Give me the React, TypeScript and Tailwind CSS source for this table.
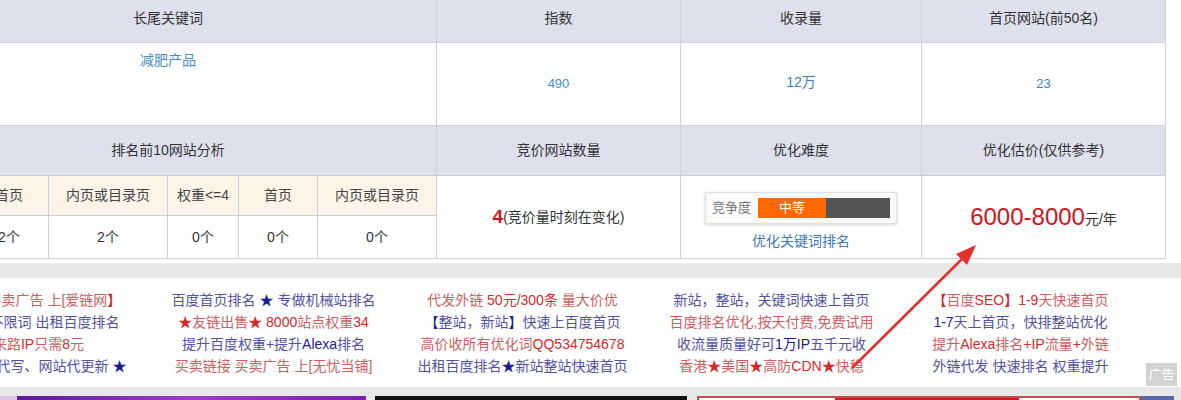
const r = "text-[#cc6060]";
const rd = "text-[#d42a2a]";
const b = "text-[#5252a2]";
const bd = "text-[#1c1c92]";

type Seg = [string, string];

const adCols: Seg[][][] = [
    [
        [[r, "买卖链接 买卖广告 上[爱链网"], [rd + " font-bold", "】"]],
        [[b, "百度快排 不限词 出租百度排名"]],
        [[r, "真实来路"], [rd, "IP"], [r, "只需"], [rd, "8"], [r, "元"]],
        [[b, "★ 原创软文代写、网站代更新 "], [bd, "★"]],
    ],
    [
        [[b, "百度首页排名 "], [bd, "★"], [b, " 专做机械站排名"]],
        [[rd, "★"], [r, "友链出售"], [rd, "★ 8000"], [r, "站点权重"], [rd, "34"]],
        [[b, "提升百度权重+提升"], [bd, "Alexa"], [b, "排名"]],
        [[r, "买卖链接 买卖广告 上[无忧当铺]"]],
    ],
    [
        [[r, "代发外链 "], [rd, "50元/300条"], [r, " 量大价优"]],
        [[bd, "【"], [b, "整站，新站"], [bd, "】"], [b, "快速上百度首页"]],
        [[r, "高价收所有优化词"], [rd, "QQ534754678"]],
        [[b, "出租百度排名"], [bd, "★"], [b, "新站整站快速首页"]],
    ],
    [
        [[b, "新站，整站，关键词快速上首页"]],
        [[r, "百度排名优化,按天付费,免费试用"]],
        [[b, "收流量质量好可"], [bd, "1万IP"], [b, "五千元收"]],
        [[r, "香港"], [rd, "★"], [r, "美国"], [rd, "★"], [r, "高防"], [rd, "CDN★"], [r, "快稳"]],
    ],
    [
        [[rd + " font-bold", "【"], [r, "百度"], [rd, "SEO"], [rd + " font-bold", "】"], [rd, "1-9"], [r, "天快速首页"]],
        [[bd, "1-7"], [b, "天上首页，快排整站优化"]],
        [[r, "提升"], [rd, "Alexa"], [r, "排名"], [rd, "+IP"], [r, "流量"], [rd, "+"], [r, "外链"]],
        [[b, "外链代发 快速排名 权重提升"]],
    ],
];

const subCols = [
    { w: "w-[70px]", head: "权重>4", val: "3个" },
    { w: "w-[79px]", head: "首页", val: "2个" },
    { w: "w-[119px]", head: "内页或目录页", val: "2个" },
    { w: "w-[71px]", head: "权重<=4", val: "0个" },
    { w: "w-[79px]", head: "首页", val: "0个" },
    { w: "w-[119px]", head: "内页或目录页", val: "0个" },
];

const line = "border-[#cdd0dc]";

export default function App() {
    return (
        <div className="relative w-[1181px] h-[400px] overflow-hidden bg-white font-['Liberation_Sans','Noto_Sans_CJK_SC',sans-serif] text-[14px] text-[#333]">
            <div className="-ml-[100px] w-[1266px]">
                {/* header 1 */}
                <div className={`flex h-[43px] bg-[#dee1ed] border-b ${line}`}>
                    <div className={`w-[537px] border-r ${line} flex items-center justify-center pb-[6px]`}>长尾关键词</div>
                    <div className={`w-[244px] border-r ${line} flex items-center justify-center pb-[6px]`}>指数</div>
                    <div className={`w-[241px] border-r ${line} flex items-center justify-center pb-[6px]`}>收录量</div>
                    <div className={`w-[244px] border-r ${line} flex items-center justify-center pb-[6px]`}>首页网站(前50名)</div>
                </div>
                {/* row 1 */}
                <div className={`flex h-[83px] bg-white border-b ${line}`}>
                    <div className={`w-[537px] border-r ${line} flex justify-center pt-[7px] text-[#4a8cc6]`}>减肥产品</div>
                    <div className={`w-[244px] border-r ${line} flex items-center justify-center text-[#4a8ec4] text-[13px]`}>490</div>
                    <div className={`w-[241px] border-r ${line} flex items-center justify-center text-[#3e7fb9] pb-[4px]`}>12万</div>
                    <div className={`w-[244px] border-r ${line} flex items-center justify-center text-[#3e7fb9] text-[13px]`}>23</div>
                </div>
                {/* header 2 */}
                <div className={`flex h-[50px] bg-[#dee1ed] border-b ${line}`}>
                    <div className={`w-[537px] border-r ${line} flex items-center justify-center`}>排名前10网站分析</div>
                    <div className={`w-[244px] border-r ${line} flex items-center justify-center`}>竞价网站数量</div>
                    <div className={`w-[241px] border-r ${line} flex items-center justify-center`}>优化难度</div>
                    <div className={`w-[244px] border-r ${line} flex items-center justify-center`}>优化估价(仅供参考)</div>
                </div>
                {/* row 3 */}
                <div className={`flex h-[83px] bg-white border-b ${line}`}>
                    <div className="w-[537px] flex flex-col">
                        <div className={`flex h-[40px] bg-[#fdf4e8] border-b ${line}`}>
                            {subCols.map((c, i) => (
                                <div key={i} className={`${c.w} border-r ${line} flex items-center justify-center text-[#444]`}>
                                    {c.head}
                                </div>
                            ))}
                        </div>
                        <div className="flex grow">
                            {subCols.map((c, i) => (
                                <div key={i} className={`${c.w} border-r ${line} flex items-center justify-center`}>
                                    {c.val}
                                </div>
                            ))}
                        </div>
                    </div>
                    <div className={`w-[244px] border-r ${line} flex items-center justify-center`}>
                        <span className="text-[#d7141c] font-bold text-[19px]">4</span>
                        <span>(竞价量时刻在变化)</span>
                    </div>
                    <div className={`w-[241px] border-r ${line} flex flex-col items-center pt-[16px]`}>
                        <div className="w-[192px] h-[32px] flex items-center gap-[7px] pl-[6px] border border-[#e0e0e0] bg-[#fafafa] shadow-[0_1px_3px_rgba(0,0,0,0.15)]">
                            <span className="text-[#777] text-[13px]">竞争度</span>
                            <div className="flex h-[20px] w-[132px]">
                                <div className="w-[68px] bg-[#ff6a00] text-white text-[13px] flex items-center justify-center">中等</div>
                                <div className="grow bg-[#555]" />
                            </div>
                        </div>
                        <div className="mt-[7px] text-[#3d7ab8]">优化关键词排名</div>
                    </div>
                    <div className={`w-[244px] border-r ${line} flex items-center justify-center`}>
                        <span className="text-[#d3121a] text-[24px] leading-none">6000-8000</span>
                        <span className="mt-[4px]">元/年</span>
                    </div>
                </div>
            </div>

            {/* gap */}
            <div className="h-[4px] bg-white" />
            <div className="h-[15px] bg-[#e8e8e8]" />

            {/* ad links */}
            <div className="relative h-[109px] bg-white pt-[11px]">
                <div className="-ml-[100px] flex">
                    {adCols.map((col, ci) => (
                        <div key={ci} className="w-[249px] flex flex-col items-center">
                            {col.map((ln, li) => (
                                <div key={li} className="h-[22px] leading-[22px] whitespace-nowrap">
                                    {ln.map(([cls, t], si) => (
                                        <span key={si} className={cls}>
                                            {t}
                                        </span>
                                    ))}
                                </div>
                            ))}
                        </div>
                    ))}
                </div>
                <div className="absolute right-[4px] top-[85px] w-[31px] h-[23px] bg-[#c8c8c8]/80 text-white text-[13px] flex items-center justify-center">
                    广告
                </div>
            </div>

            {/* bottom banners */}
            <div className="h-[9px] bg-[#e8e8e8]" />
            <div className="flex h-[10px] bg-[#e8e8e8]">
                <div className="w-[17px] bg-[#d9c2e6]" />
                <div className="w-[349px] bg-gradient-to-r from-[#5e1a94] via-[#9b3ec4] to-[#7a1fa8]" />
                <div className="w-[9px]" />
                <div className="w-[312px] bg-[#111]" />
                <div className="w-[10px]" />
                <div className="w-[444px] border-t-2 border-x-2 border-[#c0504d] bg-white flex">
                    <div className="w-[136px]" />
                    <div className="w-[184px] bg-[#d8141c]" />
                </div>
                <div className="w-[33px] bg-[#5a6aa8]" />
            </div>

            {/* arrow */}
            <svg className="absolute left-0 top-0 pointer-events-none" width={1181} height={400}>
                <line x1={852} y1={368} x2={964} y2={257} stroke="#e3302b" strokeWidth={2.5} />
                <polygon points="976,245 956,254 967,265" fill="#e3302b" />
            </svg>
        </div>
    );
}
